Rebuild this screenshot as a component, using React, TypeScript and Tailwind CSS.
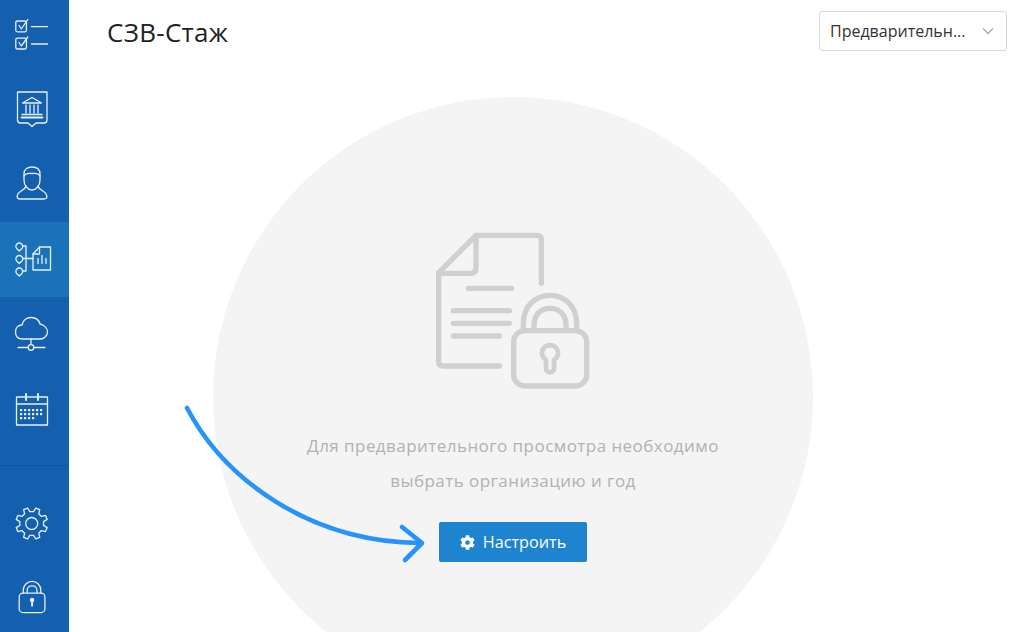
import React from "react";
import { FaCog } from "react-icons/fa";

function gearPath(cx: number, cy: number, rOut: number, rIn: number, teeth: number) {
  const pts: string[] = [];
  const step = (Math.PI * 2) / teeth;
  for (let i = 0; i < teeth; i++) {
    const a = i * step + step / 2;
    const angs: [number, number][] = [
      [a - step * 0.3, rIn],
      [a - step * 0.17, rOut],
      [a + step * 0.17, rOut],
      [a + step * 0.3, rIn],
    ];
    for (const [t, r] of angs) pts.push(`${(cx + r * Math.cos(t)).toFixed(2)} ${(cy + r * Math.sin(t)).toFixed(2)}`);
  }
  return "M" + pts.join(" L") + " Z";
}

const dots: [number, number][] = [];
[410, 414, 418].forEach((y, r) => {
  [21, 25, 29, 33, 37, 41].forEach((x, c) => {
    if (r === 2 && c > 3) return;
    dots.push([x, y]);
  });
});

function Item({ h, top, active, children }: { h: string; top: number; active?: boolean; children: React.ReactNode }) {
  return (
    <div className={active ? `${h} shrink-0 bg-[#1b72b8]` : `${h} shrink-0`}>
      <svg
        viewBox={`0 ${top} 69 ${active ? 75 : 74}`}
        className="block w-full h-full"
        fill="none"
        stroke="#e6f0f9"
        strokeWidth={1.3}
        strokeLinecap="round"
        strokeLinejoin="round"
      >
        {children}
      </svg>
    </div>
  );
}

export default function App() {
  return (
    <div
      className="flex h-[632px] w-[1032px] overflow-hidden bg-white"
      style={{ fontFamily: '"Open Sans", "Noto Sans", sans-serif' }}
    >
      <aside className="flex w-[69px] shrink-0 flex-col bg-[#1460ae]">
        <Item h="h-[74px]" top={0}>
          <rect x="15.8" y="21" width="10.6" height="10.8" rx="1.5" />
          <path d="M19 25.5 L21.3 29 L27.8 19.5" />
          <rect x="15.8" y="38.2" width="10.6" height="10.8" rx="1.5" />
          <path d="M19 42.5 L21.3 46 L27.8 37" />
          <path d="M31.5 26.7 H47.5 M31.5 44 H47.5" />
        </Item>
        <Item h="h-[74px]" top={74}>
          <path d="M17.5 92 H47 V120 Q47 123 44 123 H36 L32 126.5 L28 123 H20.5 Q17.5 123 17.5 120 Z" />
          <path d="M22.5 103 L32 97.5 L41.5 103 Z" />
          <path d="M26 105 V113 M30 105 V113 M34 105 V113 M38 105 V113" />
          <path d="M22 114.5 H42" />
          <path d="M21.5 117.5 H42.5" strokeWidth={1.8} />
        </Item>
        <Item h="h-[74px]" top={148}>
          <path d="M24 174 C24 169 28 167 32 167 C37 167 40 169 40 174 V180 C40 186 36 190 32 190 C28 190 24 186 24 180 Z" />
          <path d="M24 176 C26 172.5 28 173.5 32 173.5 C36 173.5 38 172.5 40 176" />
          <path d="M26 186 C25 191 17 191 17.2 196.5 Q17.2 199 20 199 H44 Q47 199 46.8 196.5 C47 191 39 191 38 186" />
        </Item>
        <Item h="h-[75px]" top={222} active>
          <path d="M19.3 251 L16.9 248.8 A3.4 3.4 0 1 1 21.7 248.8 Z" />
          <path d="M19.3 263.5 L16.9 261.3 A3.4 3.4 0 1 1 21.7 261.3 Z" />
          <path d="M19.3 276 L16.9 273.8 A3.4 3.4 0 1 1 21.7 273.8 Z" />
          <path d="M23 246 H26 V271 H23 M23 258.5 H33" />
          <path d="M33 254 L39.5 247 H50.5 V270 H33 Z" />
          <path d="M39.5 247 V254 H33" />
          <path d="M38 263.5 V258.5 M42 263.5 V255.5 M46 263.5 V258.5" />
        </Item>
        <Item h="h-[74px]" top={297}>
          <path d="M23 339 C18 339 15.5 336 15.5 332 C15.5 328 18 325 22 325 C23 320 27 317.5 31 317.5 C36 317.5 39 320 40 324 C44 325 47.5 328 47.5 332 C47.5 336 44 339 40 339 Z" />
          <path d="M31 339 V344.5" />
          <circle cx="31" cy="347.5" r="2.8" />
          <path d="M18 347.5 H28 M34 347.5 H45" />
        </Item>
        <Item h="h-[74px]" top={371}>
          <path d="M16.5 397 H47.5 V425 H16.5 Z" />
          <path d="M16.5 404 H47.5" />
          <path d="M26 394 V400 M38 394 V400" strokeWidth={2} />
          {dots.map(([x, y]) => (
            <rect key={`${x}-${y}`} x={x - 1} y={y - 1} width="2.2" height="2.2" fill="#e6f0f9" stroke="none" />
          ))}
        </Item>
        <div className="mt-[20px] h-px shrink-0 bg-[#11559c]" />
        <div className="h-[19px] shrink-0" />
        <Item h="h-[75px]" top={485}>
          <path d={gearPath(31.7, 523, 16, 12, 8)} />
          <circle cx="31.7" cy="523" r="6" />
        </Item>
        <Item h="h-[72px]" top={560}>
          <rect x="18.8" y="594" width="26.4" height="20" rx="4" />
          <path d="M23 594 V591 A9 9 0 0 1 41 591 V594" />
          <path d="M27 593.5 V591 A5 4.5 0 0 1 37 591 V593.5" />
          <circle cx="32" cy="601" r="2.3" fill="#e6f0f9" stroke="none" />
          <path d="M32 601 V607" strokeWidth={2} />
        </Item>
      </aside>

      <main className="relative min-w-0 flex-1">
        <header className="flex h-[62px] items-start justify-between pr-[25px]">
          <h1 className="ml-[38px] mt-[15px] text-[26px] leading-[34px] font-normal tracking-[0.3px] text-[#222]">СЗВ-Стаж</h1>
          <div className="mt-[11px] flex h-[40px] w-[188px] items-center justify-between rounded-[3px] border border-[#d9d9d9] pl-[10px] pr-[12px]">
            <span className="text-[16px] text-[#333]">Предварительн...</span>
            <svg width="12" height="8" viewBox="0 0 12 8" fill="none" stroke="#aaaaaa" strokeWidth="1.3">
              <path d="M1 1.5 L6 6.5 L11 1.5" />
            </svg>
          </div>
        </header>

        <section className="ml-[144px] mt-[35px] flex h-[600px] w-[600px] flex-col items-center rounded-full bg-[#f4f4f4] pt-[135px]">
          <svg width="180" height="180" viewBox="0 0 540 540" fill="none" stroke="#d0d0d0" strokeWidth="16" strokeLinecap="round" strokeLinejoin="round" className="-mt-[12px] -ml-[6px]">
            <path d="M364 190 V60 Q364 46 350 46 H168 L56 158 V425 Q56 438 70 438 H238" />
            <path d="M168 46 V145 Q168 160 152 160 H56" />
            <path d="M145 205 H275 M100 272 H268 M100 310 H268 M100 348 H238" />
            <rect x="281" y="332" width="219" height="166" rx="34" />
            <path d="M310 332 V310 C310 260 345 226 390 226 C435 226 470 260 470 310 V332" />
            <path d="M342 332 V315 C342 285 362 265 390 265 C418 265 438 285 438 315 V332" />
            <path d="M378 420 A24 24 0 1 1 402 420 V445 A12 12 0 0 1 378 445 Z" strokeWidth="14" />
          </svg>
          <p className="mt-[28px] text-center text-[17px] leading-[35px] tracking-[0.45px] text-[#b5b1ae]">
            Для предварительного просмотра необходимо
            <br />
            выбрать организацию и год
          </p>
          <button className="mt-[24px] flex h-[40px] w-[148px] items-center justify-center gap-[8px] rounded-[2px] bg-[#1e84d0] text-[16.2px] text-white">
            <FaCog className="h-[15px] w-[15px]" />
            Настроить
          </button>
        </section>

        <svg className="pointer-events-none absolute left-[-69px] top-0" width="1032" height="632" fill="none" stroke="#2793fb" strokeWidth="4.6" strokeLinecap="round" strokeLinejoin="round">
          <path d="M187 408 C225 480 310 542 420 543" />
          <path d="M402 527 L422 543 L405 560" />
        </svg>
      </main>
    </div>
  );
}
